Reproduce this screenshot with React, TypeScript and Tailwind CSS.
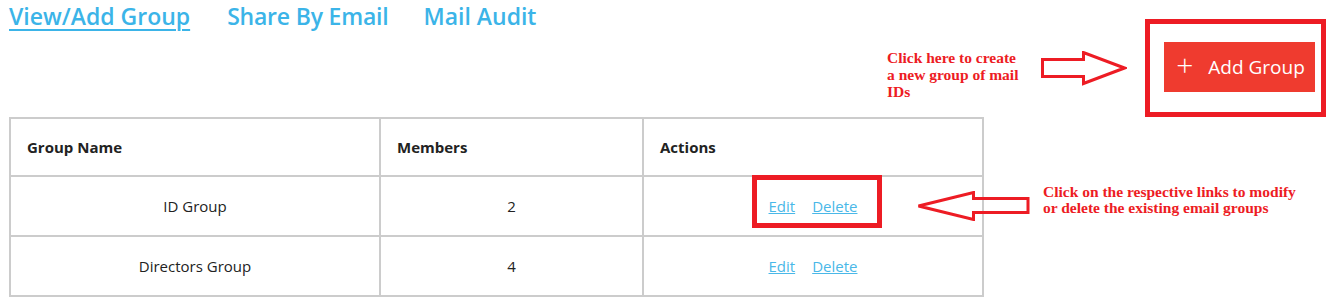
import React from "react";

const groups = [
  { name: "ID Group", members: 2 },
  { name: "Directors Group", members: 4 },
];

const tabs = ["View/Add Group", "Share By Email", "Mail Audit"];

function RightArrow() {
  return (
    <svg width="86" height="35" viewBox="0 0 86 35" className="shrink-0">
      <polygon
        points="1.5,8.5 42.5,8.5 42.5,1.5 83.5,17 42.5,32.5 42.5,25.5 1.5,25.5"
        fill="white"
        stroke="#ed1c24"
        strokeWidth="3"
      />
    </svg>
  );
}

function LeftArrow() {
  return (
    <svg width="113" height="30" viewBox="0 0 113 30">
      <polygon
        points="1.5,15 56.5,1.5 56.5,7.5 111,7.5 111,21.5 56.5,21.5 56.5,28.5"
        fill="none"
        stroke="#ed1c24"
        strokeWidth="3"
      />
    </svg>
  );
}

export default function App() {
  return (
    <div className="relative w-[1327px] h-[308px] bg-white overflow-hidden font-['Open_Sans',sans-serif]">
      <div className="flex justify-between h-[117px]">
        <nav className="flex pl-[9px] self-start">
          {tabs.map((t, i) => (
            <a
              key={t}
              className={
                "text-[23px] font-semibold text-[#3bb4e8] leading-[32px] " +
                (i === 0
                  ? "underline underline-offset-[4px] decoration-[2px]"
                  : i === 1
                  ? "ml-[37px] tracking-[-0.2px]"
                  : "ml-[35px]")
              }
            >
              {t}
            </a>
          ))}
        </nav>

        <div className="flex items-start">
          <p className="mt-[49px] w-[140px] text-[15.5px] leading-[17px] font-bold text-[#ed1c24] font-['Liberation_Serif',serif] whitespace-nowrap">
            Click here to create
            <br />
            a new group of mail
            <br />
            IDs
          </p>
          <div className="mt-[51px] ml-[14px]">
            <RightArrow />
          </div>
          <div className="ml-[18px] mt-[19px] mr-[1px] w-[181px] h-[98px] border-[5px] border-[#ed1c24] pl-[14px] pt-[18px]">
            <button className="w-[151px] h-[50px] bg-[#ef3b2f] text-white text-[19px] flex items-center justify-center gap-[15px] pl-[2px]">
              <span className="text-[30px] font-light leading-none -mt-[4px]">+</span>
              <span>Add Group</span>
            </button>
          </div>
        </div>
      </div>

      <table className="ml-[9px] w-[975px] border-collapse border-2 border-[#cccccc] text-[15px] text-[#222]">
        <thead>
          <tr className="h-[58px]">
            <th className="w-[370px] border-2 border-[#cccccc] text-left pl-[16px] font-bold">Group Name</th>
            <th className="w-[263px] border-2 border-[#cccccc] text-left pl-[16px] font-bold">Members</th>
            <th className="border-2 border-[#cccccc] text-left pl-[16px] font-bold">Actions</th>
          </tr>
        </thead>
        <tbody>
          {groups.map((g) => (
            <tr key={g.name} className="h-[60px]">
              <td className="border-2 border-[#cccccc] text-center">{g.name}</td>
              <td className="border-2 border-[#cccccc] text-center">{g.members}</td>
              <td className="border-2 border-[#cccccc] text-center">
                <a className="text-[#4ab8e8] underline mr-[17px]">Edit</a>
                <a className="text-[#4ab8e8] underline">Delete</a>
              </td>
            </tr>
          ))}
        </tbody>
      </table>

      {/* annotation over the first row */}
      <div className="absolute left-[752px] top-[175px] w-[130px] h-[53px] border-[5px] border-[#ed1c24]" />
      <div className="absolute left-[917px] top-[191px]">
        <LeftArrow />
      </div>
      <p className="absolute left-[1043px] top-[184px] text-[15.5px] leading-[16px] font-bold text-[#ed1c24] font-['Liberation_Serif',serif]">
        Click on the respective links to modify
        <br />
        or delete the existing email groups
      </p>
    </div>
  );
}
